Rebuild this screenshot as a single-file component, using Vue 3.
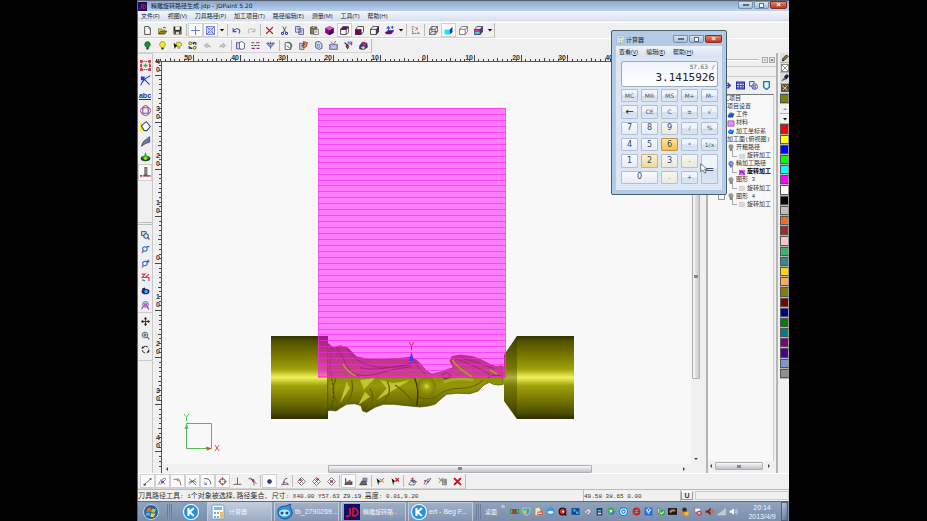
<script setup>
const icons = {
  new: '<path d="M3 1h7l3 3v11H3z" fill="#fff" stroke="#333" stroke-width="1.5"/><path d="M10 1v4h3" fill="none" stroke="#333"/>',
  open: '<path d="M1 5h5l1 2h5v7H1z" fill="#e6d84a" stroke="#555500"/><path d="M4 9h12l-4 5H1z" fill="#8a8a18" stroke="#333300"/><path d="M9 3q3-2 5 1" fill="none" stroke="#222" stroke-width="1.5"/>',
  save: '<path d="M1 1h14v14H1z" fill="#222"/><path d="M4 1h8v6H4z" fill="#f2f2e8"/><path d="M2 8h2v6H2zM12 8h2v6h-2z" fill="#808000"/><path d="M5 10h6v5H5z" fill="#ddd"/>',
  cross: '<path d="M8 0v16M0 8h16" stroke="#4a68e0" stroke-width="1.5"/>',
  gridbox: '<path d="M1 1h14v14H1zM1 1l14 14M15 1L1 15" fill="none" stroke="#4a60d8" stroke-width="1.4"/><path d="M4 4h8v8H4z" fill="none" stroke="#4a60d8"/>',
  drop: '<path d="M2 5h12l-6 7z" fill="#111"/>',
  undo: '<path d="M2 4v6h6M2 9c4-6 11-5 12 0 0 2-1 3-2 4" fill="none" stroke="#3f51b5" stroke-width="2"/>',
  redo: '<path d="M14 4v6H8M14 9C10 3 3 4 2 9c0 2 1 3 2 4" fill="none" stroke="#bbb" stroke-width="2"/>',
  del: '<path d="M2 2l12 12M14 2L2 14" stroke="#c01020" stroke-width="2.4"/>',
  cut: '<path d="M5 1l5 10M11 1L6 11" stroke="#445" stroke-width="1.5"/><g fill="none" stroke="#34349c" stroke-width="1.8"><circle cx="4.500" cy="13" r="2"/><circle cx="11.500" cy="13" r="2"/></g>',
  copy: '<path d="M1 1h8v10H1zM7 5h8v10H7z" fill="#eef" stroke="#3a3a78" stroke-width="1.3"/><path d="M3 4h4M3 6h4M9 8h4M9 10h4M9 12h4" stroke="#55a"/>',
  paste: '<path d="M1 2h11v12H1z" fill="#8a8a28" stroke="#333" stroke-width="1.3"/><path d="M4 0h5v4H4z" fill="#ddd" stroke="#333"/><path d="M7 6h8v9H7z" fill="#fff" stroke="#334"/><path d="M9 9h4M9 11h4" stroke="#44a"/>',
  cubeFull: '<path d="M8 1l7 3v8l-7 4-7-4V4z" fill="#900090" stroke="#222"/><path d="M1 4l7 4 7-4-7-3z" fill="#f050d0"/><path d="M8 8v8l7-4V4z" fill="#400050"/>',
  cubeTop: '<path d="M1 6h10v9H1zM11 6l4-4v9l-4 4" fill="#fff" stroke="#222" stroke-width="1.4"/><path d="M1 6l4-5h10l-4 5z" fill="#800070" stroke="#222"/>',
  cubeFront: '<path d="M1 6l4-5h10v9l-4 5H1z" fill="#fff" stroke="#222" stroke-width="1.4"/><path d="M1 6h10v9H1z" fill="#800050" stroke="#222"/>',
  cubeSide: '<path d="M1 6l4-5h10v9l-4 5H1zM1 6h10" fill="#fff" stroke="#222" stroke-width="1.4"/><path d="M11 6l4-5v9l-4 5z" fill="#800080" stroke="#222"/>',
  plane: '<path d="M0 12l6-4h10l-5 6H3z" fill="#800080" stroke="#402050"/><path d="M6 9V2M3 5l3-4 3 4M11 2h4M13 0v5" fill="none" stroke="#2a50d0" stroke-width="1.8"/>',
  axes: '<path d="M3 15V3M3 13h11" stroke="#189040" stroke-width="1.6" stroke-dasharray="3 1"/><path d="M0 3l3-3 3 3M8 2l4 5M12 2L8 8M12 10l4 4" fill="none" stroke="#d05050" stroke-width="1.4"/>',
  wire: '<path d="M1 6h10v9H1zM1 6l4-5h10l-4 5M15 1v9l-4 5M5 1v9h10M5 10l-4 5" fill="none" stroke="#333" stroke-width="1.2"/>',
  cyan: '<path d="M1 6h9v9H1z" fill="#10e8f8"/><path d="M10 6l5-5v10l-5 4z" fill="#1830d0"/><path d="M1 6l5-5h9l-5 5z" fill="#f0ffff"/>',
  outline: '<path d="M1 6h10v9H1zM1 6l4-5h10l-4 5M15 1v9l-4 5" fill="#fff" stroke="#444" stroke-width="1.2"/>',
  cubeColor: '<path d="M1 6h10v5H1z" fill="#f020d0"/><path d="M1 11h10v4H1z" fill="#20d8e8"/><path d="M11 6l4-5v9l-4 5z" fill="#3838c0"/><path d="M1 6h10v9H1zM1 6l4-5h10l-4 5M15 1v9l-4 5" fill="none" stroke="#333" stroke-width="1.4"/>',
  bulbGreen: '<path d="M8 1a5 5 0 0 1 3 9l-1 2H6l-1-2a5 5 0 0 1 3-9z" fill="#18902c" stroke="#174d20"/><path d="M6 12h4v3H6z" fill="#333"/>',
  bulbYellow: '<path d="M8 1a5 5 0 0 1 3 9l-1 2H6l-1-2a5 5 0 0 1 3-9z" fill="#f4ee20" stroke="#666620"/><path d="M6 12h4v3H6z" fill="#333"/>',
  bulbPick: '<path d="M10 2a4 4 0 0 1 2 8v3H9v-3a4 4 0 0 1 1-8z" fill="#f0e828" stroke="#555"/><path d="M1 3l7 6-3 1-2 4z" fill="#111"/>',
  bulbSwap: '<circle cx="4" cy="4" r="2.600" fill="#f0e020" stroke="#222"/><circle cx="12" cy="12" r="2.600" fill="#f0e020" stroke="#222"/><path d="M8 3h6v4M8 13H2V9M9 6l3-4M4 11l3 3" fill="none" stroke="#222" stroke-width="1.8"/>',
  left: '<path d="M2 8l5-4v2q5 0 6 5-3-2-6-1v2z" fill="#ccc" stroke="#999"/>',
  right: '<path d="M14 8L9 4v2q-5 0-6 5 3-2 6-1v2z" fill="#ccc" stroke="#999"/>',
  stack: '<path d="M1 3h9v11H1z" fill="#dde" stroke="#3a3a90" stroke-width="1.4"/><path d="M6 3l4-2 5 3v9l-5 2-4-2z" fill="#fff" stroke="#3a3a90" stroke-width="1.4"/>',
  lines: '<path d="M1 3h5M9 3h6M1 13h6M10 13h5" stroke="#903070" stroke-width="2"/><path d="M1 8h3M6 8h4M12 8h3" stroke="#333" stroke-width="2"/>',
  carve: '<path d="M1 4h14l-4 5H5z" fill="#aab0e8" stroke="#3a3a90"/><path d="M6 9h4l-2 6z" fill="#5060c0"/><path d="M3 2l2 4M8 1v5M13 2l-2 4" stroke="#333"/>',
  sheet: '<path d="M2 3h7l3 3v9H2z" fill="#fff" stroke="#334" stroke-width="1.3"/><path d="M6 2q6 0 8 6l-3 6" fill="none" stroke="#3b7b70" stroke-width="2"/><path d="M5 8l5 5" stroke="#803" stroke-width="1.5"/>',
  sheetRed: '<path d="M1 4h8v11H1z" fill="#ccd" stroke="#334"/><path d="M8 1l7 2-2 7-6 2z" fill="#e8a020" stroke="#a02020" stroke-width="1.4"/><path d="M4 9l7-4" stroke="#4040d0" stroke-width="2"/>',
  shield: '<path d="M3 2l6-1 5 4v8l-5 2-6-3z" fill="#dce8f8" stroke="#3850a0" stroke-width="1.6"/><path d="M6 6h4v5H6z" fill="none" stroke="#3850a0"/>',
  disk: '<path d="M1 6h14v9H1z" fill="#9aa2d8" stroke="#3f438f"/><path d="M3 1l4 4M12 0L8 6" stroke="#b04060" stroke-width="1.6"/><path d="M4 9h8M4 12h8" stroke="#fff"/>',
  tag: '<path d="M1 3l6 5-3 1 3 5" fill="none" stroke="#222" stroke-width="2"/><path d="M6 2h9M6 5h9M13 2v6" stroke="#3048c8" stroke-width="1.5"/><path d="M5 10l4-2v5z" fill="#d02020"/>',
  gem: '<path d="M1 9l5-7 8 2 1 7-6 4-8-1z" fill="#183cc0" stroke="#222"/><path d="M6 2l5 0 2 5-5 4z" fill="#e02020"/><path d="M3 11l5-2 3 3-3 3z" fill="#f0d020"/>',
  select: '<path d="M2 2h12v12H2z" fill="none" stroke="#445" stroke-width="1.4" stroke-dasharray="2 1"/><path d="M0 0h4v4H0zM12 0h4v4h-4zM0 12h4v4H0zM12 12h4v4h-4zM0 6h3v4H0zM13 6h3v4h-3z" fill="#d04050"/><path d="M8 5v6M5 8h6" stroke="#30b040" stroke-width="2"/>',
  node: '<path d="M1 15Q4 6 15 1" fill="none" stroke="#2838d8" stroke-width="1.6"/><path d="M5 5l9 9M2 3h4v4H2z" fill="#2838d8" stroke="#2838d8" stroke-width="1.5"/>',
  orbit: '<path d="M4 4h8v8H4z" fill="#eef" stroke="#5060c8" stroke-width="1.6"/><path d="M8 0l5 4 3 4-3 5-5 3-5-3-3-5 3-4z" fill="none" stroke="#e05050" stroke-width="1.5"/>',
  eraser: '<path d="M0 2l6 2-2 10-4 2z" fill="#f4f020"/><path d="M2 7l7-6 6 7-5 6-4 0z" fill="#fff" stroke="#3a4a80" stroke-width="1.5"/>',
  knife: '<path d="M2 15l3-7 9-7v8l-6 2z" fill="#777f9c" stroke="#333"/><path d="M7 6l6-4v6z" fill="#6070d8"/>',
  cone: '<ellipse cx="8" cy="11" rx="7" ry="4" fill="#185020"/><path d="M3 10q3-2 5-9 2 7 5 9-5 3-10 0z" fill="#28c028"/><circle cx="8" cy="11" r="2" fill="#e8e020"/>',
  drill: '<path d="M7 0h3v12H7z" fill="#999" stroke="#444"/><path d="M0 13h5M11 13h5" stroke="#e03030" stroke-width="2.5" stroke-dasharray="3 1"/><path d="M5 11h6v3H5z" fill="#555"/>',
  zoomBox: '<path d="M1 1h8v7H1z" fill="#ddd" stroke="#444" stroke-width="1.5"/><circle cx="9" cy="9" r="4" fill="#d8f4ff" stroke="#2060a0" stroke-width="1.8"/><path d="M12 12l3 3" stroke="#b03080" stroke-width="2.4"/>',
  zoomOut: '<circle cx="7" cy="7" r="4" fill="#d8f4ff" stroke="#2070c0" stroke-width="1.8"/><path d="M4 11l-2 3" stroke="#c03080" stroke-width="2.4"/><path d="M10 3h5" stroke="#2040a0" stroke-width="1.8"/>',
  zoomIn: '<circle cx="7" cy="8" r="4" fill="#d8f4ff" stroke="#2070c0" stroke-width="1.8"/><path d="M4 12l-2 3" stroke="#c03080" stroke-width="2.4"/><path d="M10 4h5M12.500 1v6" stroke="#2040a0" stroke-width="1.6"/>',
  zoomTwo: '<path d="M1 2h6l-5 6h5M14 2L8 8h6v6" fill="none" stroke="#e03848" stroke-width="2.2"/><path d="M2 12l5 2" stroke="#2080c0" stroke-width="2"/>',
  eye: '<ellipse cx="8" cy="8" rx="7" ry="5" fill="#20249a"/><circle cx="9" cy="8" r="3" fill="#20c0e0"/><path d="M2 4l5-2" stroke="#111" stroke-width="2"/>',
  zoomAll: '<circle cx="8" cy="6" r="5" fill="#c0f0ff" stroke="#5050c8" stroke-width="1.6"/><path d="M5 4h6v5H5z" fill="#d050c0"/><path d="M4 10l-3 4M11 10l3 5" stroke="#b02890" stroke-width="2"/>',
  move: '<path d="M8 1v14M1 8h14" stroke="#222" stroke-width="1.5"/><path d="M5 4l3-4 3 4zM5 12l3 4 3-4zM4 5L0 8l4 3zM12 5l4 3-4 3z" fill="#222"/>',
  zoomDyn: '<circle cx="7" cy="7" r="5" fill="#e4ffff" stroke="#3a4248" stroke-width="1.4"/><path d="M7 4v6M4 7h6M11 11l4 4" stroke="#385878" stroke-width="1.8"/>',
  rotate: '<path d="M13 5A6 6 0 0 0 3 5M2 9a6 6 0 0 0 5 5M10 14a6 6 0 0 0 4-6" fill="none" stroke="#222" stroke-width="1.6"/><path d="M1 7l1-5 4 3zM15 9l-1 5-3-3z" fill="#222"/>',
  snapEnd: '<path d="M3 13L13 4" stroke="#666" stroke-width="1.6"/><path d="M1 12h4v3H1zM12 2h3v3h-3z" fill="#444"/>',
  snapMid: '<path d="M1 14Q4 3 14 2M4 5l9 8M14 4L4 13" fill="none" stroke="#666" stroke-width="1.3"/><circle cx="8" cy="9" r="2.500" fill="#3850e0"/>',
  snapCorner: '<path d="M1 4h7q5 1 6 11" fill="none" stroke="#555" stroke-width="1.4"/><circle cx="9" cy="5" r="2.500" fill="#e09030"/>',
  snapX: '<path d="M2 3l12 11M14 3L2 13M1 10q8-6 14 0" fill="none" stroke="#444" stroke-width="1.3"/>',
  snapArc: '<path d="M2 3q11-2 12 10" fill="none" stroke="#444" stroke-width="1.5"/><path d="M3 13h4" stroke="#4466aa" stroke-width="2"/><circle cx="4" cy="11" r="2" fill="none" stroke="#888"/>',
  snapQuad: '<circle cx="8" cy="8" r="5" fill="none" stroke="#444" stroke-width="1.5"/><path d="M8 0l2 3-2 3-2-3zM8 10l2 3-2 3-2-3zM0 8l3-2 3 2-3 2zM10 8l3-2 3 2-3 2z" fill="#c05038"/>',
  snapPerp: '<path d="M8 1v12M1 13h14" stroke="#555" stroke-width="1.6"/>',
  snapTan: '<path d="M1 3q9-1 10 12M4 1l11 11" fill="none" stroke="#444" stroke-width="1.4"/><circle cx="9" cy="6" r="2.300" fill="#b03060"/>',
  snapDot: '<circle cx="8" cy="8" r="4" fill="#223" /><circle cx="8" cy="8" r="2.200" fill="#3048e0"/>',
  snapNear: '<path d="M2 14q5-1 5-6t6-6M5 13h10l-4-3" fill="none" stroke="#444" stroke-width="1.4"/><path d="M6 8l3 3" stroke="#b04040" stroke-width="2"/>',
  diamond: '<path d="M8 1l7 7-7 7-7-7zM4.500 4.500l7 7M11.500 4.500l-7 7" fill="#fff" stroke="#444" stroke-width="1.2"/><circle cx="6" cy="5" r="2.400" fill="#c03070"/>',
  diamond2: '<path d="M8 1l7 7-7 7-7-7zM4.500 4.500l7 7M11.500 4.500l-7 7" fill="#fff" stroke="#444" stroke-width="1.2"/><circle cx="10" cy="4" r="2.400" fill="#c03070"/>',
  diamond3: '<path d="M8 1l7 7-7 7-7-7zM4.500 4.500l7 7M11.500 4.500l-7 7" fill="#fff" stroke="#444" stroke-width="1.2"/><circle cx="8" cy="8" r="2.400" fill="#c03070"/>',
  block: '<path d="M3 2v11M1 13h13V9H5" fill="#777" stroke="#333" stroke-width="1.8"/><circle cx="10" cy="7" r="2" fill="#b05070"/>',
  block2: '<path d="M1 14h13l-2-7H5z" fill="#666" stroke="#333"/><path d="M7 7V2h7v6z" fill="#8890d0" stroke="#445"/>',
  pick: '<path d="M1 2l7 6-3 1-1 6z" fill="#111"/><path d="M7 3l7 7M14 2L7 10" stroke="#665a40" stroke-width="1.5"/><circle cx="10" cy="6" r="2" fill="#e0a030"/>',
  pickDel: '<path d="M1 2l7 6-3 1-1 6z" fill="#111"/><path d="M8 2l6 6M14 2L8 8" stroke="#d01020" stroke-width="2.4"/>',
  layers: '<path d="M1 12l5-4h9l-4 6H3z" fill="#eee" stroke="#444" stroke-width="1.3"/><path d="M4 6h9M8 2v5" stroke="#445" stroke-width="1.5"/><circle cx="10" cy="9" r="2" fill="#5060d0"/><circle cx="8" cy="3" r="2" fill="#c04060"/>',
  wand: '<path d="M2 13Q5 3 14 3L5 14" fill="none" stroke="#555" stroke-width="1.4"/><circle cx="4" cy="7" r="2" fill="#d04050"/><circle cx="9" cy="8" r="2" fill="#4850d8"/>',
  list: '<path d="M8 4h7v10H8z" fill="#bbb" stroke="#555"/><path d="M1 2l7 6M8 2L2 10M10 7h4M10 10h4" stroke="#555" stroke-width="1.4"/><circle cx="5" cy="5" r="2" fill="#e0a030"/>',
  delBold: '<path d="M2 2l12 12M14 2L2 14" stroke="#d01010" stroke-width="3.6"/>',
  pencil: '<path d="M3 14l1-5 7-7 3 3-7 7z" fill="#a08828" stroke="#111" stroke-width="1.8"/>',
  boxX: '<path d="M1 1h14v14H1zM1 1l14 14M15 1L1 15" fill="#fff" stroke="#555" stroke-width="1.3"/>',
  dropper: '<path d="M0 15l7-9 4 4z" fill="#557"/><path d="M6 5l6-5 4 4-5 7z" fill="#223"/>',
  spray: '<path d="M0 0h16v16H0z" fill="#555540"/><path d="M2 3l11 10M13 3L4 12" stroke="#e0d870" stroke-width="2"/><path d="M7 1l4 4" stroke="#e06080" stroke-width="2"/>',
  up: '<path d="M4 10l4-4 4 4z" fill="#999"/>',
  down: '<path d="M4 6h8l-4 5z" fill="#111"/>',
  bluePiece: '<path d="M1 8l5-4h9l-3 8H2z" fill="#2050d8" stroke="#103080"/><path d="M3 4l6-2 5 3" fill="none" stroke="#30a040" stroke-width="3"/>',
  material: '<path d="M1 2h14v12H1z" fill="#f48cf0" stroke="#7a40a0" stroke-width="1.6"/>',
  coord: '<path d="M1 8l5-5 9 3-3 8-9-1z" fill="#2060d8"/><path d="M2 10l12-5" stroke="#20b0e0" stroke-width="3"/>',
  bulb: '<circle cx="8" cy="6" r="5" fill="#aaa" stroke="#666"/><path d="M5 4l6 5M6 11h4v4H6z" stroke="#555" fill="#888"/>',
  bulbOn: '<circle cx="8" cy="6" r="5" fill="#28c8f0" stroke="#a030c0" stroke-width="2"/><path d="M6 11h4v4H6z" fill="#c030c0"/>',
  grayBox: '<path d="M1 2h14v12H1z" fill="#d8d8d8"/>',
  path: '<path d="M1 2h14v12H1z" fill="#f060e8"/><path d="M1 13L8 4l6 10M2 4l12 7" fill="none" stroke="#4038c8" stroke-width="2"/>',
  refresh: '<path d="M3 8h9M8 3l5 5-5 5" fill="none" stroke="#3040c0" stroke-width="2.5"/>',
  table: '<path d="M1 2h14v12H1z" fill="#eef" stroke="#2030a0" stroke-width="2"/><path d="M1 4h14M1 8h14M1 11h14M6 4v10M11 4v10" stroke="#2838a8" stroke-width="1.5"/>',
  shapes: '<path d="M1 1h8v8H1z" fill="#eef" stroke="#3040b0" stroke-width="1.6"/><circle cx="10" cy="10" r="5" fill="#fff" stroke="#3040b0" stroke-width="1.6"/><path d="M7 8h5v5H7z" fill="#c8b040" stroke="#3040b0"/>',
  badge: '<path d="M3 1h10v10l-5 4-5-4z" fill="#d8ffff" stroke="#207890" stroke-width="2.4"/>',
  jd: '<path d="M0 0h16v16H0z" fill="#10106c"/><path d="M6 4v7q-1 2-4 1M9 4v8h2q3-1 3-4t-5-4" fill="none" stroke="#e81818" stroke-width="1.6"/>',
  calc: '<rect x="2" y="1" width="12" height="14" rx="1" fill="#f4fbff" stroke="#6da4c8"/><path d="M4 3h8v3H4z" fill="#78bce4"/><path d="M4 8h2v2H4zM7 8h2v2H7zM4 12h2v2H4zM7 12h2v2H7z" fill="#8aa8c0"/><path d="M10 8h3v6h-3z" fill="#f2bc62"/>',
  orb: '<circle cx="8" cy="8" r="7.500" fill="#28649c" stroke="#b8d4e8"/><path d="M4 5q2-2 4-.5L7.500 8Q5 7 3.200 8z" fill="#f06830"/><path d="M9 4.500q2 1 4 0L12 8q-2 1-4 0z" fill="#94d050"/><path d="M3 9q2-1 4.200 0l-.8 3.400Q4.500 11 2.800 12z" fill="#40b0f0"/><path d="M8.200 9q2 1 4 .2l-1 3.400q-2 .8-3.800-.2z" fill="#f8d030"/>',
  kugou: '<circle cx="8" cy="8" r="7.500" fill="#2590e0" stroke="#e8f6ff" stroke-width="1.2"/><path d="M5.500 4v8M11 4L6.500 8l4.500 4" fill="none" stroke="#fff" stroke-width="2.200"/>',
  wangwang: '<path d="M1 9q-1-5 3-6 2-1 5-1l5-2q-2 2 0 5 3 5-1 8-5 4-10 0-2-1-2-4z" fill="#2c94e4" stroke="#145694"/><ellipse cx="7.500" cy="9" rx="5.500" ry="3.500" fill="#c4e8fc"/><circle cx="5" cy="9" r="1.500" fill="#124c88"/><circle cx="10" cy="9" r="1.500" fill="#124c88"/>',
  t1: '<path d="M0 4h16v8H0z" fill="#173"/><circle cx="8" cy="8" r="4" fill="#e42020"/><path d="M1 5h3v6H1zM12 5h3v6h-3z" fill="#30e030"/>',
  t2: '<path d="M2 2h12v6q-1 5-6 7-5-2-6-7z" fill="#3090e0" stroke="#fff"/><path d="M8 3v11q-4-2-5-6z" fill="#f0c830"/><path d="M8 3h5v5H8z" fill="#48b050"/>',
  t3: '<path d="M2 1h8l2 5v9H2z" fill="#f4e8c0" stroke="#b08040"/><path d="M6 8h9v6H6z" fill="#e04030"/><path d="M7 11h7" stroke="#fff" stroke-width="2"/>',
  t4: '<circle cx="8" cy="8" r="7" fill="#3a94dc"/><path d="M2 9q6-5 12 0l-3 3H5z" fill="#d8f0ff"/>',
  t5: '<circle cx="8" cy="8" r="7" fill="#151515"/><circle cx="8" cy="8" r="5" fill="#d82828"/><circle cx="9" cy="8" r="2" fill="#fff"/><path d="M11 12l4 3" stroke="#111" stroke-width="2"/>',
  t6: '<path d="M1 2h14v12H1z" fill="#104890"/><path d="M4 4h4v4H4zM9 8h4v4H9z" fill="#38c0f0"/>',
  t7: '<path d="M1 9l9-7 5 5-5 7z" fill="#d8dce2" stroke="#667"/><circle cx="8" cy="9" r="2" fill="#888"/>',
  t8: '<path d="M3 2h10v13H3z" fill="#1c3448"/><path d="M5 5h6v3H5z" fill="#60b8f0"/><path d="M5 10h6v3H5z" fill="#d8e8f0"/>',
  t9: '<circle cx="7" cy="7" r="6" fill="#40b048"/><path d="M7 7h8l-5 8-5-3z" fill="#2c80d0"/><path d="M4 5l6 1-3 5z" fill="#fff"/>',
  t10: '<circle cx="8" cy="8" r="7" fill="#e6f8ff" stroke="#1580dc" stroke-width="2"/><circle cx="8" cy="8" r="3" fill="none" stroke="#1880d8" stroke-width="2"/>',
  t11: '<circle cx="8" cy="8" r="6" fill="#704040" stroke="#c02828" stroke-width="2"/><path d="M3 13L13 3" stroke="#e84040" stroke-width="2"/><path d="M5 6h5M6 10h5" stroke="#ddd"/>',
  t12: '<rect x="1" y="1" width="14" height="14" fill="#286be0"/><path d="M4 4l4 8 4-8M8 2l3 3-3 3-3-3z" fill="none" stroke="#fff" stroke-width="1.500"/>',
  t13: '<path d="M2 2h4l2 10H4z" fill="#ddd" stroke="#555"/><circle cx="11" cy="10" r="5" fill="#30a840"/><path d="M8 10l2 2 4-4" fill="none" stroke="#fff" stroke-width="1.800"/>',
  t14: '<path d="M0 2h16v12H0z" fill="#1c1a1a"/><path d="M2 7q5-5 11-2v3H8l-4 3z" fill="#c08058"/>',
  t15: '<circle cx="8" cy="5" r="4" fill="#412818"/><path d="M2 14q0-6 6-6t6 6z" fill="#e08028"/><path d="M8 9h7v6H8z" fill="#e8c030"/>',
  t16: '<path d="M3 1v14M3 2h10v7H3z" fill="#f8f8f8" stroke="#888"/><circle cx="11" cy="11" r="4.500" fill="#e03030"/><path d="M9 9l4 4M13 9l-4 4" stroke="#fff" stroke-width="1.500"/>',
  t17: '<path d="M1 6h4l5-5v14l-5-5H1z" fill="#702818"/><path d="M8 8h7M12 4l4 4-4 4" fill="none" stroke="#e06830" stroke-width="2"/>',
  t18: '<path d="M1 14L15 3v11z" fill="#bcc6d2" stroke="#dde"/>',
  t19: '<path d="M1 6h3l5-4v12l-5-4H1z" fill="#f2f5fa"/><path d="M11 5q3 3 0 6M13 3q4 5 0 10" fill="none" stroke="#e8edf5" stroke-width="1.300"/>'
}

const menus = ['文件(F)', '视图(V)', '刀具路径(P)', '加工项目(T)', '路径编辑(E)', '测量(M)', '工具(T)', '帮助(H)']
const mainBar = ['new', 'open', 'save', '|', '*cross', '*gridbox', 'drop', '|', 'undo', 'redo', '|', 'del', 'cut', 'copy', 'paste', 'cubeFull', '*cubeTop', 'cubeFront', 'cubeSide', 'plane', 'drop', '|', 'axes', '|', 'wire', '*cyan', 'outline', 'cubeColor', 'drop']
const editBar = ['bulbGreen', 'bulbYellow', 'bulbPick', 'bulbSwap', 'left', 'right', '|', 'stack', 'lines', 'carve', '|', 'sheet', 'sheetRed', 'shield', 'disk', 'tag', 'gem']
const snapBar = ['*snapEnd', '*snapMid', '*snapCorner', '*snapX', '*snapArc', '*snapQuad', 'snapPerp', 'snapTan', '|', '*snapDot', 'snapNear', '|', 'diamond', 'diamond2', 'diamond3', '|', '*block', 'block2', '|', 'pick', 'pickDel', '|', 'layers', 'wand', 'list', 'delBold']
const parse = list => list.map(s => ({ name: s.replace('*', ''), on: s[0] === '*', sep: s === '|' }))
const topBars = [parse(mainBar), parse(editBar)]
const snaps = parse(snapBar)

const tools = ['select', 'node', 'text', 'orbit', 'eraser', 'knife', 'cone', 'drill']
const views = ['zoomBox', 'zoomOut', 'zoomIn', 'zoomTwo', 'eye', 'zoomAll']
const moves = ['move', 'zoomDyn', 'rotate']

const paletteTools = ['pencil', 'boxX', 'dropper', 'spray']
const colors = ['#ff0000', '#ffff00', '#0000ff', '#00ff00', '#00ffff', '#ff00ff', '#ffffff', '#000000', '#c0c0c0', '#ff6820', '#a52a2a', '#ffc0cb', '#3cb371', '#388888', '#ffd700', '#ffa858', '#808000', '#800000', '#000090', '#008000', '#008080', '#800080', '#4b0090', '#7898c8', '#909090']

const tree = [
  { t: '加工项目', l: 0 }, { t: '项目设置', l: 1 },
  { t: '工件', l: 2, i: 'bluePiece' }, { t: '材料', l: 2, i: 'material' }, { t: '加工坐标系', l: 2, i: 'coord' },
  { t: '加工面(俯视图)', l: 1 },
  { t: '开粗路径', l: 2, i: 'bulb' }, { t: '旋转加工', l: 3, i: 'grayBox' },
  { t: '精加工路径', l: 2, i: 'bulbOn' }, { t: '旋转加工', l: 3, i: 'path', b: true },
  { t: '图形 3', l: 2, i: 'bulb', fold: true }, { t: '旋转加工', l: 3, i: 'grayBox' },
  { t: '图形 4', l: 2, i: 'bulb', fold: true }, { t: '旋转加工', l: 3, i: 'grayBox' }
]

const keys = ['MC', 'MR', 'MS', 'M+', 'M-', '←', 'CE', 'C', '±', '√', '7', '8', '9', '/', '%', '4', '5', '6', '*', '1/x', '1', '2', '3', '-', '=', '0', '.', '+']
const keyClass = k => ({
  num: /^\d$/.test(k), wide: k === '0', tall: k === '=', hot: k === '6', warm: k === '2', pale: k === '9' || k === '3' || k === '-' || k === '.', arrow: k === '←'
})

const tasks = [
  { i: 'calc', t: '计算器', cjk: true, active: true },
  { i: 'wangwang', t: 'tb_2790269...' },
  { i: 'jd', t: '精雕旋转路...', cjk: true },
  { i: 'kugou', t: 'ert - Beg F...' }
]

const ticks = (from, to, origin, step) => {
  const out = []
  for (let n = from; n <= to; n++) out.push({ n, p: Math.round(origin + n * step), major: n % 10 === 0, label: String(Math.abs(n)) })
  return out
}
const hTicks = ticks(-58, 58, 274, 4.68)
const vTicks = ticks(-42, 43, 201, 4.71)
const passes = Array.from({ length: 46 }, (_, k) => Math.round(108 + k * 5.96))
</script>

<template>
  <div class="screen">
    <div class="shell">
      <header class="titlebar">
        <svg class="icon" viewBox="0 0 16 16" v-html="icons.jd" />
        <span>精雕旋转路径生成.jdp - JDPaint 5.20</span>
        <div class="winbtns">
          <button aria-label="最小化"><i class="min"></i></button>
          <button aria-label="还原"><i class="max"></i></button>
          <button class="close" aria-label="关闭">×</button>
        </div>
      </header>

      <nav class="menubar">
        <button v-for="m in menus" :key="m">{{ m }}</button>
      </nav>

      <div v-for="(bar, b) in topBars" :key="b" class="toolbar-row">
        <div class="toolbar">
          <template v-for="(it, i) in bar" :key="i">
            <span v-if="it.sep" class="sep"></span>
            <button v-else class="tool" :class="{ on: it.on, narrow: it.name === 'drop' }" :aria-label="it.name">
              <svg class="icon" viewBox="0 0 16 16" v-html="icons[it.name]" />
            </button>
          </template>
        </div>
      </div>

      <main class="main">
        <aside class="toolbox">
          <div class="group tall-group">
            <button v-for="t in tools" :key="t" class="tool" :class="{ on: t === 'drill' }" :aria-label="t">
              <span v-if="t === 'text'" class="abc">abc</span>
              <svg v-else class="icon" viewBox="0 0 16 16" v-html="icons[t]" />
            </button>
          </div>
          <div class="group view-group">
            <button v-for="t in views" :key="t" class="tool" :aria-label="t"><svg class="icon" viewBox="0 0 16 16" v-html="icons[t]" /></button>
          </div>
          <div class="group move-group">
            <button v-for="t in moves" :key="t" class="tool" :aria-label="t"><svg class="icon" viewBox="0 0 16 16" v-html="icons[t]" /></button>
          </div>
        </aside>

        <section class="workspace">
          <svg class="hruler">
            <path d="M2 8.500H2000" stroke="#555" />
            <g v-for="t in hTicks" :key="t.n">
              <rect :x="t.p" :y="t.major ? 2 : t.n % 5 ? 6 : 5" width="1" :height="t.major ? 7 : t.n % 5 ? 2 : 3" fill="#444" />
              <text v-if="t.major" :x="t.p - 1" y="7" text-anchor="end">{{ t.label }}</text>
            </g>
          </svg>
          <svg class="vruler">
            <rect x="8" y="0" width="1" height="100%" fill="#555" />
            <g v-for="t in vTicks" :key="t.n">
              <rect :x="t.major ? 2 : t.n % 5 ? 6 : 5" :y="t.p" :width="t.major ? 7 : t.n % 5 ? 2 : 3" height="1" fill="#444" />
              <template v-if="t.major">
                <text v-for="(c, i) in t.label" :key="i" x="3" :y="t.p - 3 - (t.label.length - 1 - i) * 8">{{ c }}</text>
              </template>
            </g>
          </svg>

          <svg class="canvas">
            <defs>
              <linearGradient id="rod" x1="0" y1="0" x2="0" y2="1">
                <stop offset="0" stop-color="#333300" /><stop offset=".06" stop-color="#505000" /><stop offset=".25" stop-color="#7c7c00" />
                <stop offset=".4" stop-color="#a0a00c" /><stop offset=".5" stop-color="#f2f258" /><stop offset=".6" stop-color="#a0a00c" />
                <stop offset=".75" stop-color="#7c7c00" /><stop offset=".93" stop-color="#4c4c00" /><stop offset="1" stop-color="#2c2c00" />
              </linearGradient>
              <linearGradient id="flesh" x1="0" y1="0" x2="0" y2="1">
                <stop offset="0" stop-color="#5c5c00" /><stop offset=".4" stop-color="#868600" /><stop offset=".62" stop-color="#96960a" />
                <stop offset=".85" stop-color="#707000" /><stop offset="1" stop-color="#484800" />
              </linearGradient>
              <radialGradient id="knee"><stop offset="0" stop-color="#dede48" /><stop offset=".35" stop-color="#a4a410" /><stop offset="1" stop-color="#7c7c00" /></radialGradient>
            </defs>
            <g transform="translate(-162 -62)">
              <rect x="271" y="336" width="57" height="83" fill="url(#rod)" />
              <rect x="517" y="336" width="57" height="83" fill="url(#rod)" />
              <path d="M504 355L517 336V419L504 401z" fill="url(#rod)" />
              <path d="M504 355L517 336V419L504 401z" fill="#303000" opacity=".35" />
              <g transform="translate(260 325) scale(.3333)">
                <path d="M203 55L213 62 222 68 240 62 262 68 275 80 290 95 320 102 370 103 420 100 450 97 470 105 485 120 500 138 515 148 540 142 560 134 580 128 570 108 575 95 600 90 640 95 665 105 690 118 710 125 722 122 730 125V178L715 180 700 178 688 172 672 180 655 198 630 206 590 205 560 208 545 220 525 238 505 243 480 246 440 242 400 238 370 238 345 247 320 262 308 258 303 242 285 236 260 238 240 250 228 258 210 256 203 258z" fill="url(#flesh)" stroke="#484800" stroke-width="2" />
                <path d="M230 66Q250 100 262 125T300 155M262 72Q285 110 330 122T450 120M245 120Q290 165 345 148T455 125M300 128Q350 142 470 110M465 105Q472 130 495 146" fill="none" stroke="#434300" stroke-width="3" />
                <path d="M255 160L270 190 240 235 260 170zM300 165L345 160 310 195 330 215 295 240 315 200zM360 165L400 175 450 165 410 190 350 225 380 190z" fill="#c2c234" />
                <path d="M228 160Q210 200 232 235M275 165Q285 200 262 230M330 190Q350 225 318 255M382 170Q400 205 366 235M405 180Q430 195 458 230" fill="none" stroke="#666600" stroke-width="4" />
                <path d="M216 70Q206 120 216 165T213 252" fill="none" stroke="#464600" stroke-width="3" stroke-dasharray="9 4" />
                <path d="M464 160Q480 195 470 242" fill="none" stroke="#343400" stroke-width="4" />
                <circle cx="500" cy="184" r="28" fill="url(#knee)" />
                <path d="M475 215Q500 228 530 215Q555 190 600 190T670 165" fill="none" stroke="#626200" stroke-width="3" />
                <path d="M550 172Q590 157 640 166" fill="none" stroke="#aaaa20" stroke-width="8" />
                <path d="M572 106Q600 140 636 155M590 102Q630 115 690 148M600 98Q650 110 700 130M545 150L560 142 575 154 555 162z" fill="none" stroke="#424200" stroke-width="3" />
                <path d="M684 158Q700 145 728 155" fill="none" stroke="#4c4c00" stroke-width="4" />
              </g>
              <rect x="318" y="108" width="188" height="270" fill="#ff00ff" fill-opacity=".5" />
              <g fill="#ff20f4" fill-opacity=".6"><rect v-for="y in passes" :key="y" x="318" :y="y" width="188" height="1" /></g>
              <path d="M318.500 108V378M505.500 108V378" stroke="#ff30ff" stroke-opacity=".5" />
              <path d="M248 117Q262 140 288 153M577 106Q596 134 636 155M690 135L712 148" transform="translate(260 325) scale(.3333)" fill="none" stroke="#a8a018" stroke-width="5" />
              <path d="M409 342L411.500 346 414 342M411.500 346V350" fill="none" stroke="#e8204c" />
              <path d="M411.500 352L414 361H409z" fill="#5030f0" />
              <path d="M186.500 423.500H211.500V448.500H186.500z" fill="none" stroke="#58b858" />
              <path d="M186.500 423L188.500 429H184.500z" fill="#50c850" />
              <path d="M184 414L186.500 417 189 414M186.500 417V421" fill="none" stroke="#50d050" />
              <path d="M212 448.500L206 446.500 207 450.500z" fill="#b06020" />
              <path d="M215 445L219 451M219 445L215 451" stroke="#e85050" />
            </g>
          </svg>

          <div class="vscroll"><div class="thumb"><i></i></div><b class="a-down"></b></div>
          <div class="hscroll"><b class="a-left"></b><div class="thumb"><i></i></div><b class="a-right"></b></div>
        </section>

        <aside class="panel">
          <div class="panel-head"><hr><button aria-label="停靠">▫</button><button aria-label="关闭面板">×</button></div>
          <div class="panel-tabs"></div>
          <div class="panel-tools">
            <button v-for="n in ['refresh', 'table', 'shapes', 'badge']" :key="n" :aria-label="n"><svg class="icon" viewBox="0 0 16 16" v-html="icons[n]" /></button>
          </div>
          <div class="tree-box">
            <ul class="tree">
              <li v-for="(r, i) in tree" :key="i" :class="['lv' + r.l, { bold: r.b, fold: r.fold }]">
                <svg v-if="r.i" class="icon" viewBox="0 0 16 16" v-html="icons[r.i]" /><span>{{ r.t }}</span>
              </li>
            </ul>
          </div>
          <div class="hscroll mini"><b class="a-left"></b><div class="thumb"><i></i></div><b class="a-right"></b></div>
        </aside>

        <aside class="palette">
          <div class="swatches">
            <button v-for="n in paletteTools" :key="n" :aria-label="n"><svg class="icon" viewBox="0 0 16 16" v-html="icons[n]" /></button>
            <button class="swatch" aria-label="当前颜色" :style="{ background: '#808000' }"></button>
            <button class="step" aria-label="上"><svg class="icon" viewBox="0 0 16 16" v-html="icons.up" /></button>
            <button class="step" aria-label="下"><svg class="icon" viewBox="0 0 16 16" v-html="icons.down" /></button>
            <button v-for="c in colors" :key="c" class="swatch" :aria-label="c" :style="{ background: c }"></button>
          </div>
        </aside>
      </main>

      <div class="toolbar-row">
        <div class="toolbar snap">
          <template v-for="(it, i) in snaps" :key="i">
            <span v-if="it.sep" class="sep"></span>
            <button v-else class="tool" :class="{ on: it.on }" :aria-label="it.name"><svg class="icon" viewBox="0 0 16 16" v-html="icons[it.name]" /></button>
          </template>
        </div>
      </div>

      <div class="status">
        <p>刀具路径工具<s>: 1</s>个对象被选择<s>,</s>路径集合<s>, </s>尺寸<s>: X40.00 Y57.63 Z9.19 </s>高度<s>: 0.01,9.20</s></p>
        <p class="coords"><s>49.58 38.65 0.00</s></p>
        <button>U</button>
        <span class="rest"></span>
      </div>

      <footer class="taskbar">
        <button class="orb" aria-label="开始"><svg viewBox="0 0 16 16" v-html="icons.orb" /></button>
        <span class="grip"></span>
        <button class="launch" aria-label="K"><svg viewBox="0 0 16 16" v-html="icons.kugou" /></button>
        <div class="tasks">
          <button v-for="t in tasks" :key="t.t" :class="{ active: t.active, cjk: t.cjk }"><svg viewBox="0 0 16 16" v-html="icons[t.i]" /><span>{{ t.t }}</span></button>
        </div>
        <span class="grip"></span>
        <span class="desk">桌面</span><span class="more">»</span>
        <div class="tray"><svg v-for="n in 19" :key="n" viewBox="0 0 16 16" v-html="icons['t' + n]" /></div>
        <div class="clock"><span>20:14</span><span>2013/4/9</span></div>
        <button class="peek" aria-label="显示桌面"></button>
      </footer>

      <section class="calc">
        <div class="calc-title">
          <svg class="icon" viewBox="0 0 16 16" v-html="icons.calc" /><span>计算器</span>
          <div class="winbtns">
            <button aria-label="最小化计算器"><i class="min"></i></button>
            <button aria-label="最大化计算器"><i class="max"></i></button>
            <button class="close" aria-label="关闭计算器">×</button>
          </div>
        </div>
        <div class="calc-menu"><button>查看(<u>V</u>)</button><button>编辑(<u>E</u>)</button><button>帮助(<u>H</u>)</button></div>
        <div class="calc-body">
          <output class="display"><small>57.63 /</small><span>3.1415926</span></output>
          <div class="keys"><button v-for="k in keys" :key="k" :class="keyClass(k)">{{ k }}</button></div>
        </div>
        <svg class="cursor" viewBox="0 0 12 16"><path d="M1 1v12l3-3 3 5 2-1-2-5h4z" fill="#fff" stroke="#333" /></svg>
      </section>
    </div>
  </div>
</template>

<style>
body { margin: 0; background: #000; }
</style>

<style scoped>
.screen { min-height: 100vh; background: #000; padding: 0 138px 0 137px; display: flex; font: 6px/8px "Liberation Sans", "Noto Sans CJK SC", sans-serif; color: #222; }
.screen, .screen * { box-sizing: border-box; }
button { font: inherit; color: inherit; background: none; border: 0; padding: 0; margin: 0; display: flex; align-items: center; justify-content: center; white-space: nowrap; }
svg { display: block; }
.icon { width: 9px; height: 9px; flex: none; }
.shell { position: relative; flex: 1; min-width: 0; display: grid; grid-template-columns: minmax(0, 1fr); grid-template-rows: 11px 11px 16px 15px minmax(0, 1fr) 16px 12px 20px; background: #f0f0f0; border-left: 1px solid #666; }

.titlebar { display: flex; align-items: center; gap: 4px; padding: 0 2px 0 0; border-top: 1px solid #58616c; background: linear-gradient(#88aad4, #bdd1ea); white-space: nowrap; font-family: "DejaVu Sans", "Noto Sans CJK SC", sans-serif; }
.winbtns { display: flex; gap: 1px; margin-left: auto; align-self: flex-start; }
.winbtns button { width: 15px; height: 8px; border: 1px solid #7890b0; border-radius: 0 0 2px 2px; background: linear-gradient(#d4e2f2, #a8bfdc); }
.winbtns .close { width: 17px; color: #fff; font: bold 8px/6px "Liberation Sans", sans-serif; background: linear-gradient(#e08868, #c03420); border-color: #803020; }
.min { width: 6px; height: 2px; background: #fff; border: 1px solid #667; }
.max { width: 5px; height: 5px; border: 1px solid #667; background: #fff; }
.menubar { display: flex; align-items: center; gap: 8px; padding: 0 3px; background: linear-gradient(#f3f6fc, #d6deef); border-bottom: 1px solid #eef; font-family: "Open Sans", "Noto Sans CJK SC", sans-serif; }

.toolbar-row { display: flex; min-width: 0; background: #f0f0f0; border-top: 1px solid #fff; }
.toolbar { display: flex; padding-left: 2px; border-right: 1px solid #bbb; border-bottom: 1px solid #d4d4d4; }
.tool { width: 15px; flex: none; }
.tool.narrow { width: 8px; }
.tool.narrow .icon { width: 6px; height: 6px; }
.tool.on { background: #fbfbfb; border: 1px solid #d0d0d0; }
.sep { width: 1px; margin: 1px; background: #bbb; }
.snap .sep { margin: 1px 1px 1px 0; }

.main { display: grid; grid-template-columns: 15px minmax(0, 1fr) 6px 72px 11px; min-height: 0; }
.toolbox { display: flex; flex-direction: column; border-right: 1px solid #c8c8c8; padding-top: 4px; border-top: 1px solid #ccc; }
.toolbox .tool { width: 14px; flex: 1; }
.toolbox .icon { width: 11px; height: 11px; }
.group { display: flex; flex-direction: column; }
.tall-group { height: 123px; margin-bottom: 41px; }
.view-group { height: 91px; border-top: 3px double #bbb; padding-top: 3px; border-bottom: 1px solid #ccc; }
.toolbox .view-group .icon, .toolbox .move-group .icon { width: 9px; height: 9px; }
.move-group { height: 48px; border-bottom: 1px solid #ccc; padding: 2px 0 4px; }
.abc { font: bold 7px/7px "Liberation Sans", sans-serif; color: #2028a0; border-bottom: 1px solid #2028a0; }

.workspace { display: grid; grid-template-columns: 9px minmax(0, 1fr) 9px; grid-template-rows: 9px minmax(0, 1fr) 9px; min-width: 0; min-height: 0; }
.hruler { grid-area: 1 / 1 / 2 / 4; width: 100%; height: 9px; }
.vruler { grid-area: 2 / 1 / 4 / 2; width: 9px; height: 100%; overflow: visible; }
.hruler text, .vruler text { font: bold 7px/8px "Liberation Sans", sans-serif; fill: #333; }
.canvas { grid-area: 2 / 2; width: 100%; height: 100%; background: #f8f8f8; }
.vscroll, .hscroll { display: flex; align-items: center; background: #f1f1f1; }
.vscroll { grid-area: 2 / 3; flex-direction: column; padding: 111px 0 2px; }
.hscroll { grid-area: 3 / 2 / 4 / 4; padding: 0 13px 0 2px; }
.thumb { display: flex; align-items: center; justify-content: center; border: 1px solid #b0b0b4; border-radius: 1px; }
.vscroll .thumb { width: 8px; height: 206px; background: linear-gradient(90deg, #f8f8f8, #c8c8ce); }
.hscroll .thumb { width: 264px; height: 8px; margin-left: 160px; background: linear-gradient(#f8f8f8, #c0c0c8); }
.thumb i { width: 4px; height: 3px; background: #888; }
.a-down, .a-left, .a-right { width: 0; height: 0; border: 2px solid transparent; }
.a-down { border-top-color: #444; margin-top: auto; }
.a-left { border-right-color: #444; }
.a-right { border-left-color: #444; margin-left: auto; }

.panel { grid-column: 4; display: flex; flex-direction: column; border-left: 2px solid #b4b4b8; border-right: 2px solid #b4b4b8; min-width: 0; padding-bottom: 2px; }
.panel-head { display: flex; align-items: center; gap: 1px; height: 13px; padding: 0 1px; }
.panel-head hr { flex: 1; border: 0; border-top: 1px solid #bbb; border-bottom: 1px solid #fff; margin: 0 2px 0 0; }
.panel-head button { width: 6px; height: 6px; border: 1px solid #aaa; font-size: 6px; line-height: 4px; }
.panel-tabs { height: 11px; border-top: 1px solid #ccc; border-bottom: 1px solid #ccc; }
.panel-tools { display: flex; justify-content: flex-end; align-items: center; gap: 4px; height: 16px; padding-right: 5px; }
.tree-box { flex: 1; background: #f8f8f8; border-top: 1px solid #777; border-right: 1px solid #ccc; margin: 1px 2px 0 0; overflow: hidden; }
.tree { list-style: none; margin: 0; padding: 0; height: 114px; display: grid; grid-template-rows: repeat(14, minmax(0, 1fr)); color: #333; font-family: "Liberation Mono", "Noto Sans CJK SC", monospace; }
.tree li { display: flex; align-items: center; gap: 1px; white-space: nowrap; }
.tree .icon { width: 8px; height: 7px; }
.lv0 { padding-left: 9px; }
.lv1 { padding-left: 19px; }
.lv2 { padding-left: 19px; }
.lv3 { padding-left: 24px; }
.lv3::before { content: ""; width: 4px; height: 6px; margin-bottom: 6px; border-left: 1px solid #aaa; border-bottom: 1px solid #aaa; }
.fold { position: relative; }
.fold::before { content: "−"; position: absolute; left: 10px; width: 5px; height: 5px; border: 1px solid #999; line-height: 3px; font-size: 5px; }
.bold { font-weight: bold; color: #000; }
.hscroll.mini { height: 10px; padding: 0 4px 0 0; }
.mini .thumb { width: 48px; height: 8px; margin-left: 3px; }
.palette { grid-column: 5; padding-left: 2px; }
.swatches { height: 326px; display: grid; grid-template-rows: repeat(32, minmax(0, 1fr)); background: #b4b4b4; }
.swatches button { margin-bottom: 1px; background: #ddd; overflow: hidden; }
.swatches .icon { width: 8px; height: 8px; }
.swatches .step { background: #f2f2f2; }
.swatches .swatch { border: 1px solid #555; border-right-color: #999; }

.status { display: grid; grid-template-columns: 446px 97px 12px minmax(0, 1fr); align-items: center; font-size: 7px; border-top: 1px solid #bbb; background: #f0f0f0; white-space: pre; line-height: 10px; color: #333; }
.status p { margin: 0; overflow: hidden; border-right: 1px solid #bbb; font-family: "Noto Sans CJK SC", sans-serif; }
.status s { text-decoration: none; font: 6px/8px "Liberation Mono", monospace; }
.status button { height: 9px; border: 1px solid #999; border-top-color: #fff; font: bold 7px/8px "Liberation Sans", sans-serif; }
.rest { height: 9px; border: 1px solid #ccc; margin-left: 2px; }

.taskbar { display: flex; align-items: stretch; border-top: 1px solid #586a84; background: linear-gradient(#8fa2be, #7a8dab); color: #f0f4fa; font-size: 7px; white-space: nowrap; min-width: 0; }
.orb { width: 26px; }
.orb svg, .launch svg { width: 16px; height: 16px; }
.grip { width: 5px; margin: 2px 3px; background: repeating-linear-gradient(90deg, #6a7e9c 0 1px, #8c9fba 1px 2px); flex: none; }
.launch { width: 32px; }
.tasks { display: grid; grid-template-columns: repeat(4, 65px); gap: 2px; flex: none; }
.tasks button { justify-content: flex-start; gap: 2px; padding-left: 2px; border: 1px solid #c0ccdc; border-bottom: 0; border-radius: 1px; background: linear-gradient(#a0b0c8, #8294b2); }
.tasks button.active { background: linear-gradient(#c2cddd, #9aabc3); }
.tasks svg { width: 16px; height: 16px; flex: none; }
.tasks .cjk { font-size: 6px; gap: 3px; }
.desk { align-self: center; font-size: 6px; margin-left: 1px; }
.more { margin: 1px 0 0 4px; }
.tray { flex: 1; display: flex; align-items: center; justify-content: space-around; margin-left: 3px; min-width: 0; }
.tray svg { width: 9px; height: 9px; }
.clock { width: 41px; display: flex; flex-direction: column; align-items: center; justify-content: center; line-height: 9px; padding-left: 3px; }
.peek { width: 7px; border: 1px solid #4f617c; background: linear-gradient(120deg, #b6c4d8, #5f7390); margin-right: 1px; }

.calc { position: absolute; right: 62px; top: 30px; width: 116px; display: flex; flex-direction: column; padding: 0 4px 4px; border: 1px solid #46606c; border-radius: 2px; background: #b4cbe6; }
.calc-title { height: 15px; display: flex; align-items: center; gap: 1px; padding-top: 2px; }
.calc-title .winbtns { margin-top: 2px; }
.calc-menu { height: 11px; display: flex; gap: 8px; padding: 0 3px; background: linear-gradient(#eef3fb, #d6e0f0); font-family: "Open Sans", "Noto Sans CJK SC", sans-serif; }
.calc-body { padding: 4px 4px 6px 5px; background: #dce6f4; }
.display { display: flex; flex-direction: column; align-items: flex-end; height: 26px; padding: 1px 2px 0; border: 1px solid #98acc4; border-radius: 2px; background: linear-gradient(#f0f5fc, #fff); font: 11px/14px "DejaVu Sans Mono", monospace; color: #222; margin-bottom: 2px; }
.display small { font-size: 6px; line-height: 8px; color: #555; }
.keys { height: 95px; display: grid; grid-template-columns: repeat(5, minmax(0, 1fr)); grid-template-rows: repeat(6, minmax(0, 1fr)); gap: 3px; }
.keys button { border: 1px solid #b0c0d2; border-radius: 1px; background: linear-gradient(#eef4fa 45%, #d4e0ee 55%, #dae6f2); color: #40566e; font: 6px/8px "DejaVu Sans", sans-serif; }
.keys .num { font-size: 8px; background: linear-gradient(#fafcfe, #e4ecf6); color: #2c4a74; }
.keys .wide { grid-column: span 2; }
.keys .tall { grid-row: span 2; font-size: 12px; }
.keys .arrow { font-size: 10px; color: #222; }
.keys .pale { background: linear-gradient(#f8f7f0, #eceadf); }
.keys .warm { background: linear-gradient(#fbf0d0, #f2d898); border-color: #c8b480; }
.keys .hot { background: linear-gradient(#fce4a0, #f6c04c); border-color: #c09440; }
.cursor { position: absolute; right: 18px; top: 132px; width: 8px; height: 11px; }
</style>
